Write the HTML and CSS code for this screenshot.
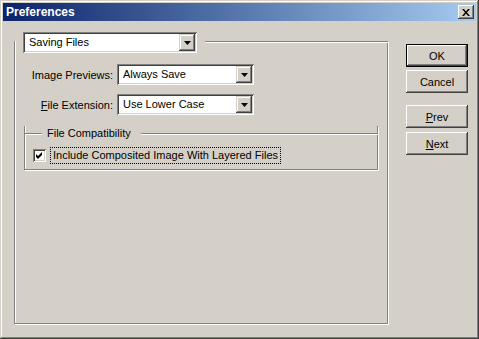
FILE: index.html
```html
<!DOCTYPE html>
<html>
<head>
<meta charset="utf-8">
<title>Preferences</title>
<link rel="stylesheet" href="styles.css">
</head>
<body>
<div class="window">
  <div class="titlebar">
    <span class="title">Preferences</span>
    <span class="close"><svg width="8" height="7" viewBox="0 0 8 7"><path d="M0 0h2l2 2.4 2-2.4h2l-3 3.5 3 3.5h-2l-2-2.4-2 2.4h-2l3-3.5z" fill="#000"/></svg></span>
  </div>
  <div class="body">
    <div class="group">
      <div class="group-head">
        <div class="select wide"><span class="value">Saving Files</span><span class="arrow"><svg width="7" height="4" viewBox="0 0 7 4"><path d="M0 0h7l-3.5 4z" fill="#000"/></svg></span></div>
        <div class="rule"></div>
      </div>
      <div class="field">
        <span class="label">Ima<u>g</u>e Previews:</span>
        <div class="select"><span class="value">Always Save</span><span class="arrow"><svg width="7" height="4" viewBox="0 0 7 4"><path d="M0 0h7l-3.5 4z" fill="#000"/></svg></span></div>
      </div>
      <div class="field">
        <span class="label"><u>F</u>ile Extension:</span>
        <div class="select"><span class="value">Use Lower Case</span><span class="arrow"><svg width="7" height="4" viewBox="0 0 7 4"><path d="M0 0h7l-3.5 4z" fill="#000"/></svg></span></div>
      </div>
      <div class="subgroup">
        <div class="sub-head">
          <span class="seg"></span>
          <span class="legend">File Compatibility</span>
          <span class="rule"></span>
        </div>
        <div class="check-row">
          <span class="checkbox"><svg width="7" height="7" viewBox="0 0 7 7"><path d="M0 2L2 4L6 0V3L2 7L0 5Z" fill="#000"/></svg></span>
          <span class="check-label">Include Composited Image With Layered Files</span>
        </div>
      </div>
    </div>
    <div class="buttons">
      <div class="btn default">OK</div>
      <div class="btn cancel">Cancel</div>
      <div class="btn prev"><u>P</u>rev</div>
      <div class="btn next"><u>N</u>ext</div>
    </div>
  </div>
</div>
</body>
</html>
```
FILE: styles.css
```css
* { box-sizing: border-box; }
html, body { margin: 0; padding: 0; }
body {
  font: 11px "Liberation Sans", Arial, sans-serif;
  color: #000;
  background: #d4d0c8;
}
u { text-decoration: underline; text-underline-offset: 1px; }

.window {
  width: 479px;
  height: 339px;
  background: #d4d0c8;
  padding: 3px;
  display: flex;
  flex-direction: column;
  box-shadow: inset -1px -1px #404040, inset 1px 1px #d4d0c8, inset -2px -2px #808080, inset 2px 2px #fff;
}

.titlebar {
  height: 18px;
  flex: none;
  display: flex;
  align-items: center;
  justify-content: space-between;
  padding: 0 2px 0 3px;
  background: linear-gradient(to right, #0a246a, #a6caf0);
}
.title {
  color: #fff;
  font-weight: bold;
  font-size: 12px;
}
.close {
  width: 16px;
  height: 14px;
  display: flex;
  align-items: center;
  justify-content: center;
  background: #d4d0c8;
  box-shadow: inset -1px -1px #404040, inset 1px 1px #fff, inset -2px -2px #808080, inset 2px 2px #d4d0c8;
}

.body {
  flex: 1;
  display: flex;
  align-items: flex-start;
}

.group {
  margin: 20px 0 0 11px;
  width: 374px;
  height: 283px;
  border: 1px solid #808080;
  border-top: 0;
  box-shadow: inset 1px 0 #fff, 1px 1px #fff;
  padding-left: 8px;
}
.group-head {
  display: flex;
  height: 21px;
  margin-top: -9px;
}
.rule {
  flex: 1;
  height: 2px;
  border-top: 1px solid #808080;
  border-bottom: 1px solid #fff;
}
.group-head .rule {
  margin: 9px -1px 0 8px;
}

.select {
  display: flex;
  height: 21px;
  width: 137px;
  padding: 2px;
  background: #fff;
  box-shadow: inset 1px 1px #808080, inset -1px -1px #fff, inset 2px 2px #404040, inset -2px -2px #d4d0c8;
}
.select.wide { width: 174px; }
.value {
  flex: 1;
  padding-left: 4px;
  line-height: 17px;
  white-space: nowrap;
}
.arrow {
  width: 16px;
  height: 17px;
  display: flex;
  align-items: center;
  justify-content: center;
  background: #d4d0c8;
  box-shadow: inset -1px -1px #404040, inset 1px 1px #d4d0c8, inset -2px -2px #808080, inset 2px 2px #fff;
}

.field {
  display: flex;
  align-items: center;
  margin-top: 11px;
}
.field + .field { margin-top: 9px; }
.label {
  width: 94px;
  padding-right: 4px;
  text-align: right;
  white-space: nowrap;
}

.subgroup {
  margin: 18px 0 0 1px;
  width: 354px;
  border: 1px solid #808080;
  border-top: 0;
  box-shadow: inset 1px 0 #fff, 1px 1px #fff;
}
.sub-head {
  display: flex;
  align-items: flex-start;
  height: 14px;
  margin-top: -7px;
}
.seg {
  width: 17px;
  height: 2px;
  margin-top: 7px;
  border-top: 1px solid #808080;
  border-bottom: 1px solid #fff;
}
.legend {
  padding: 0 10px 0 5px;
  line-height: 14px;
  white-space: nowrap;
}
.sub-head .rule {
  margin: 7px -1px 0 0;
}
.check-row {
  display: flex;
  align-items: center;
  height: 17px;
  margin: 7px 0 5px 8px;
}
.checkbox {
  width: 13px;
  height: 13px;
  display: flex;
  align-items: center;
  justify-content: center;
  background: #fff;
  box-shadow: inset 1px 1px #808080, inset -1px -1px #fff, inset 2px 2px #404040, inset -2px -2px #d4d0c8;
}
.check-label {
  margin-left: 4px;
  height: 17px;
  padding: 0 2px;
  line-height: 15px;
  border: 1px dotted #000;
  white-space: nowrap;
}

.buttons {
  display: flex;
  flex-direction: column;
  width: 62px;
  margin: 23px 0 0 18px;
}
.btn {
  height: 23px;
  display: flex;
  align-items: center;
  justify-content: center;
  background: #d4d0c8;
  box-shadow: inset -1px -1px #404040, inset 1px 1px #fff, inset -2px -2px #808080, inset 2px 2px #d4d0c8;
}
.btn.default {
  box-shadow: inset 0 0 0 1px #000, inset -2px -2px #404040, inset 2px 2px #fff, inset -3px -3px #808080, inset 3px 3px #d4d0c8;
}
.btn.cancel { margin-top: 3px; }
.btn.prev { margin-top: 12px; }
.btn.next { margin-top: 4px; }
```
